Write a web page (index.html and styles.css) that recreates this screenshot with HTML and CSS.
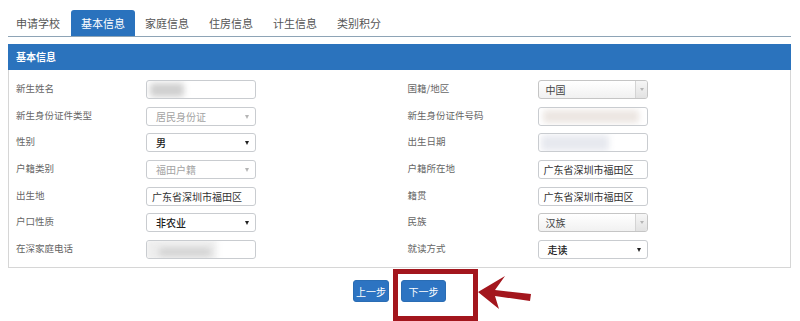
FILE: index.html
```html
<!DOCTYPE html>
<html lang="zh">
<head>
<meta charset="utf-8">
<title>基本信息</title>
<link rel="stylesheet" href="styles.css">
</head>
<body>
<div class="page">
  <ul class="tabs">
    <li class="tab">申请学校</li>
    <li class="tab active">基本信息</li>
    <li class="tab">家庭信息</li>
    <li class="tab">住房信息</li>
    <li class="tab">计生信息</li>
    <li class="tab">类别积分</li>
  </ul>

  <div class="panel">
    <div class="panel-head">基本信息</div>
    <div class="panel-body">
      <div class="row"><span class="label">新生姓名</span><div class="field"><span class="blur b-name"></span></div></div>
      <div class="row"><span class="label">国籍/地区</span><div class="field chosen"><span class="val">中国</span><span class="cbtn"><span class="tri g"></span></span></div></div>

      <div class="row"><span class="label">新生身份证件类型</span><div class="field sel disabled"><span class="val">居民身份证</span><span class="tri g"></span></div></div>
      <div class="row"><span class="label">新生身份证件号码</span><div class="field"><span class="blur b-id"></span></div></div>

      <div class="row"><span class="label">性别</span><div class="field sel"><span class="val strong">男</span><span class="tri"></span></div></div>
      <div class="row"><span class="label">出生日期</span><div class="field"><span class="blur b-date"></span></div></div>

      <div class="row"><span class="label">户籍类别</span><div class="field sel disabled"><span class="val">福田户籍</span><span class="tri g"></span></div></div>
      <div class="row"><span class="label">户籍所在地</span><div class="field text"><span class="val">广东省深圳市福田区</span></div></div>

      <div class="row"><span class="label">出生地</span><div class="field text"><span class="val">广东省深圳市福田区</span></div></div>
      <div class="row"><span class="label">籍贯</span><div class="field text"><span class="val">广东省深圳市福田区</span></div></div>

      <div class="row"><span class="label">户口性质</span><div class="field sel"><span class="val strong">非农业</span><span class="tri"></span></div></div>
      <div class="row"><span class="label">民族</span><div class="field chosen"><span class="val">汉族</span><span class="cbtn"><span class="tri g"></span></span></div></div>

      <div class="row"><span class="label">在深家庭电话</span><div class="field"><span class="blur b-phone"></span><span class="blur b-phone2"></span></div></div>
      <div class="row"><span class="label">就读方式</span><div class="field sel"><span class="val strong">走读</span><span class="tri"></span></div></div>
    </div>
  </div>

  <div class="actions">
    <button class="btn prev">上一步</button>
    <button class="btn next">下一步</button>
  </div>

  <div class="highlight"></div>
  <svg class="arrow" width="70" height="45" viewBox="0 0 70 45">
    <polygon points="8,22 35,6 25,20 61,24 60,31 25,26 29,39" fill="#a3161d"/>
  </svg>
</div>
</body>
</html>
```

FILE: styles.css
```css
* { box-sizing: border-box; }
html, body { margin: 0; padding: 0; background: #fff; }
body {
  font-family: "Noto Sans CJK SC", "Noto Sans", "Liberation Sans", sans-serif;
  color: #555;
}
.page {
  position: relative;
  width: 800px;
  height: 321px;
  padding: 10px 9px 0 8px;
}
.tabs {
  list-style: none;
  margin: 0;
  padding: 0;
  display: flex;
  height: 27px;
  border-bottom: 1px solid #8ea4b6;
}
.tab {
  padding: 0 10px;
  font-size: 11px;
  line-height: 27px;
  color: #555;
  border-radius: 3px 3px 0 0;
}
.tab:first-child { margin-left: -2px; }
.tab.active {
  background: #2a72bd;
  color: #fff;
  margin: 0 0 0 1px;
}
.panel {
  margin-top: 7px;
  border: 1px solid #d6d6d6;
  border-top: none;
  height: 224px;
}
.panel-head {
  background: #2b73bd;
  color: #fff;
  font-size: 10px;
  font-weight: bold;
  height: 26px;
  line-height: 26px;
  padding-left: 8px;
  margin: 0 -1px;
}
.panel-body {
  display: grid;
  grid-template-columns: 1fr 1fr;
  grid-auto-rows: 26.7px;
  padding: 10px 0 0 0;
}
.row {
  display: flex;
  align-items: flex-start;
  padding-left: 7px;
}
.row:nth-child(even) { padding-left: 8px; }
.label {
  width: 130px;
  font-size: 9.5px;
  color: #666;
  line-height: 14px;
  padding-top: 1px;
}
.field {
  position: relative;
  width: 110px;
  height: 19px;
  border: 1px solid #c9ccd0;
  border-radius: 3px;
  background: #fff;
  display: flex;
  align-items: center;
  overflow: hidden;
}
.val {
  font-size: 10px;
  color: #333;
  line-height: 17px;
}
.text .val { padding-left: 5px; }
.sel .val { padding-left: 9px; }
.sel .val.strong { color: #222; font-weight: 500; }
.disabled { background: #fff; }
.disabled .val { color: #a3a3a3; }
.tri {
  position: absolute;
  right: 6px;
  top: 7px;
  width: 0;
  height: 0;
  border-left: 2.5px solid transparent;
  border-right: 2.5px solid transparent;
  border-top: 4px solid #222;
}
.tri.g { border-top-color: #b5b5b5; }
.chosen {
  background: linear-gradient(#ffffff, #f1f1f1);
  border-color: #c5c5c5;
}
.chosen .val { padding-left: 7px; color: #444; }
.cbtn {
  position: absolute;
  right: 0;
  top: 0;
  bottom: 0;
  width: 12px;
  border-left: 1px solid #d4d4d4;
  background: linear-gradient(#f6f6f6, #e2e2e2);
}
.cbtn .tri { right: 3px; top: 7px; border-top-width: 3px; border-left-width: 2px; border-right-width: 2px; }
.blur {
  position: absolute;
  filter: blur(3px);
  border-radius: 2px;
}
.b-name { left: 3px; top: 2px; width: 34px; height: 14px; background: #d0d0d0; }
.b-id { left: 4px; top: 2px; width: 96px; height: 13px; background: #ece6e2; }
.b-date { left: 2px; top: 1px; width: 68px; height: 16px; background: #e7e9ef; }
.b-phone { left: -2px; top: -2px; width: 72px; height: 22px; background: #eeeeee; }
.b-phone2 { left: 12px; top: 7px; width: 52px; height: 8px; background: #d2d2d2; }
.actions {
  display: flex;
  justify-content: center;
  gap: 12px;
  margin-top: 12px;
  padding-left: 0;
}
.btn {
  font-family: inherit;
  font-size: 10px;
  color: #fff;
  background: #2d74c2;
  border: 1px solid #2a6db4;
  border-radius: 3px;
  height: 22px;
  padding: 0;
  cursor: pointer;
}
.btn.prev { width: 36px; }
.btn.next { width: 45px; }
.highlight {
  position: absolute;
  left: 393px;
  top: 269px;
  width: 85px;
  height: 52px;
  border: 5px solid #a3161d;
}
.arrow {
  position: absolute;
  left: 470px;
  top: 270px;
}
```
